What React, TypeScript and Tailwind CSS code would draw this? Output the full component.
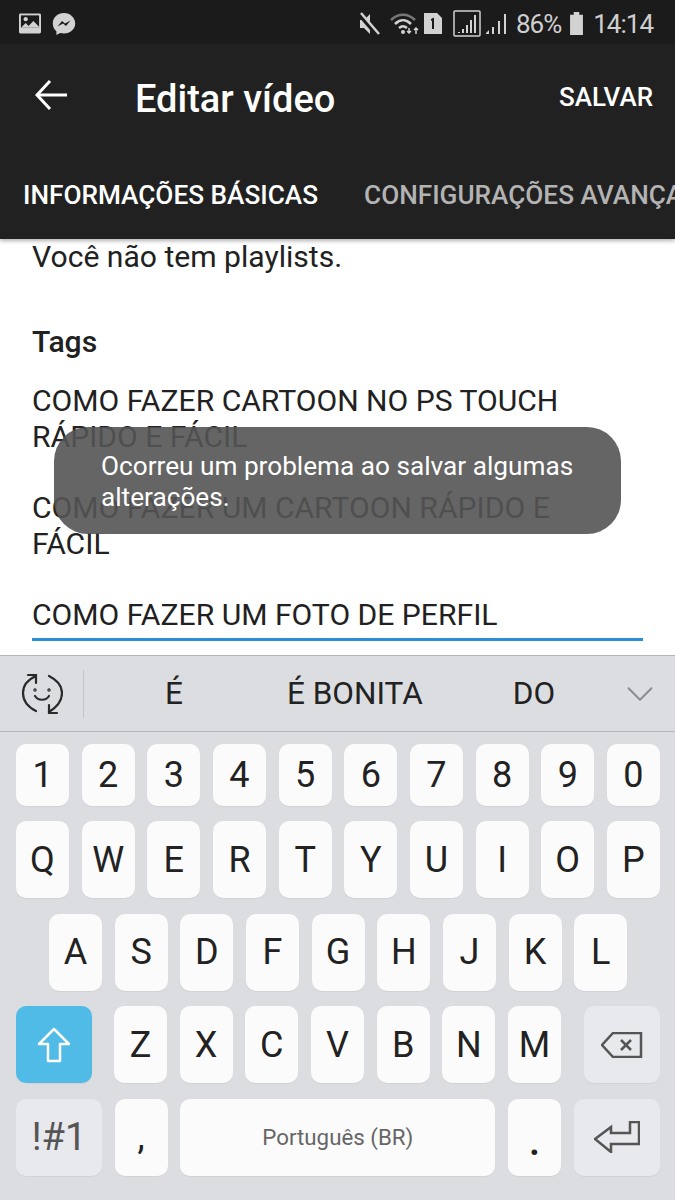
import type { ReactNode } from 'react';
import { ChevronDown } from 'lucide-react';

const font = "font-['Roboto','Liberation_Sans',sans-serif]";

function Key({ label, className = 'w-[53px] bg-[#fbfbfb] text-[#222]' }: { label: ReactNode; className?: string }) {
  return (
    <div className={`flex h-[77px] flex-none items-center justify-center rounded-[10px] text-[36px] leading-none shadow-[0_1px_1px_rgba(0,0,0,0.05)] ${className}`}>
      {label}
    </div>
  );
}

function KeyRow({ keys, className = '' }: { keys: string[]; className?: string }) {
  return (
    <div className={`flex gap-[12.67px] ${className}`}>
      {keys.map((k) => (
        <Key key={k} label={k} />
      ))}
    </div>
  );
}

function StatusBar() {
  return (
    <div className="flex h-[44px] items-center justify-between bg-[#1b1b1b] pl-[19px] pr-[22px] pt-[3px] text-[#cfcfcf]">
      <div className="flex items-center gap-[11px]">
        <svg width="22" height="21" viewBox="0 0 23 21">
          <rect width="23" height="21" rx="1.5" fill="#d2d2d2" />
          <rect x="2" y="2" width="19" height="13" fill="#1b1b1b" />
          <circle cx="7" cy="6" r="2.2" fill="#d2d2d2" />
          <path d="M2 15l5-5 3 3 5-5 6 6v1z" fill="#d2d2d2" />
        </svg>
        <svg width="24" height="24" viewBox="0 0 24 24">
          <path d="M12 1C5.6 1 .8 5.6.8 11.5c0 3.2 1.4 5.9 3.6 7.800V23l3.700-2c1.200.3 2.500.5 3.900.5 6.400 0 11.200-4.500 11.200-10S18.400 1 12 1z" fill="#d2d2d2" />
          <path d="M5.500 14.500l4.500-5.500 3 2.500 5.500-3-4.500 5.500-3-2.500z" fill="#1b1b1b" />
        </svg>
      </div>
      <div className="flex items-center text-[26px] leading-none tracking-[-1px]">
        <svg width="22" height="26" viewBox="0 0 22 26" className="mr-[10px]">
          <path d="M2 9h4l6-6v20l-6-6H2z" fill="#d2d2d2" />
          <path d="M1 3l18 21" stroke="#1b1b1b" strokeWidth="4" />
          <path d="M3 2l18 21" stroke="#d2d2d2" strokeWidth="2.500" />
        </svg>
        <svg width="30" height="24" viewBox="0 0 30 24" className="mr-[3px]">
          <path d="M1 8c7-7 17-7 24 0" fill="none" stroke="#777" strokeWidth="2.500" />
          <path d="M5 12c5-5 11-5 16 0" fill="none" stroke="#d2d2d2" strokeWidth="2.500" />
          <path d="M9 16c3-2.500 5-2.500 8 0" fill="none" stroke="#d2d2d2" strokeWidth="2.500" />
          <circle cx="13" cy="20" r="2" fill="#d2d2d2" />
          <path d="M19 16v5m-2-2l2 2 2-2M26 22v-6m-2 2l2-2 2 2" fill="none" stroke="#d2d2d2" strokeWidth="1.500" />
        </svg>
        <svg width="20" height="21" viewBox="0 0 20 21" className="mr-[10px]">
          <path d="M1 0h13l5 5v16H1z" fill="#d2d2d2" />
          <path d="M8 6l3-1.500V16H9V7.500L8 8z" fill="#1b1b1b" />
        </svg>
        <svg width="28" height="28" viewBox="0 0 28 28" className="mr-[4px]">
          <rect x="1" y="1" width="26" height="25" rx="1" fill="none" stroke="#d2d2d2" strokeWidth="1.500" />
          <path d="M5 22h2v1H5zM9 19h2v4H9zM13 15h2v8h-2zM17 10h2v13h-2zM21 5h2v18h-2z" fill="#d2d2d2" />
        </svg>
        <svg width="22" height="24" viewBox="0 0 22 24" className="mr-[9px]">
          <path d="M1 21l3-3v4H1zM7 15h2v7H7zM13 9h2v13h-2zM19 2h2v20h-2z" fill="#d2d2d2" />
        </svg>
        <span className={font}>86%</span>
        <svg width="15" height="23" viewBox="0 0 14 25" className="ml-[8px] mr-[9px]">
          <path d="M4 0h6v3h4v22H0V3h4z" fill="#d2d2d2" />
        </svg>
        <span className={font}>14:14</span>
      </div>
    </div>
  );
}

export default function App() {
  return (
    <div className={`relative flex h-[1200px] w-[675px] flex-col overflow-hidden bg-white ${font}`}>
      <StatusBar />

      {/* Toolbar + tabs */}
      <div className="relative z-10 h-[195px] overflow-hidden bg-[#212121] shadow-[0_2px_4px_rgba(0,0,0,0.3)]">
        <div className="flex h-[104px] items-center pb-[2px] pl-[35px] pr-[22px]">
          <svg width="32" height="30" viewBox="0 0 32 30" fill="none" stroke="#fff" strokeWidth="3">
            <path d="M32 15H3" />
            <path d="M15 1L2 15l13 14" />
          </svg>
          <span className="ml-[68px] flex-1 pt-[8px] text-[38px] font-medium text-white">Editar vídeo</span>
          <span className="pt-[4px] text-[26px] font-medium text-white">SALVAR</span>
        </div>
        <div className="flex gap-[46px] whitespace-nowrap pl-[23px] pt-[27px] text-[26.2px] font-medium leading-[40px]">
          <span className="text-white">INFORMAÇÕES BÁSICAS</span>
          <span className="text-[#b3b3b3]">CONFIGURAÇÕES AVANÇADAS</span>
        </div>
      </div>

      {/* Form */}
      <div className="h-[416px] flex-none overflow-hidden bg-white pl-[32px] pr-[32px] text-[30.1px] text-[#212121]">
        <p className="leading-[36px]">Você não tem playlists.</p>
        <p className="mt-[47px] font-medium leading-[40px]">Tags</p>
        <p className="mt-[21px] leading-[36px]">COMO FAZER CARTOON NO PS TOUCH RÁPIDO E FÁCIL</p>
        <p className="mt-[35px] pr-[60px] leading-[36px]">COMO FAZER UM CARTOON RÁPIDO E FÁCIL</p>
        <p className="mt-[35px] border-b-[3px] border-[#2b8fd8] pb-[5px] leading-[36px]">COMO FAZER UM FOTO DE PERFIL</p>
      </div>

      {/* Toast */}
      <div className="absolute left-[54px] top-[427px] z-20 flex h-[107px] w-[567px] items-center rounded-[34px] bg-[#545454]/90 pl-[47px] pr-[30px] pt-[3px] text-[26.2px] leading-[31px] text-white">
        Ocorreu um problema ao salvar algumas alterações.
      </div>

      {/* Keyboard */}
      <div className="flex flex-1 flex-col bg-[#dcdde1]">
        <div className="flex h-[77px] flex-none items-center border-y border-[#b4b5b8] text-[31.5px] text-[#222]">
          <div className="flex w-[84px] items-center justify-center border-r border-[#c4c5c9] py-[3px]">
            <svg width="42" height="42" viewBox="0 0 42 42" fill="none" stroke="#2a2a2a" strokeWidth="2.200" strokeLinecap="round">
              <path d="M15 3C6 7 2 13 2 20c0 8 5 14 13 18" />
              <path d="M28 3c8 4 13 10 13 17 0 8-5 14-13 19" />
              <path d="M7 2h8v8" />
              <path d="M28 32v8h8" />
              <path d="M14 23c3 5 11 5 14 0" />
              <circle cx="14" cy="17" r="0.600" />
              <circle cx="28" cy="17" r="0.600" />
            </svg>
          </div>
          <span className="ml-[80px] w-[20px] text-center">É</span>
          <span className="ml-[103px]">É BONITA</span>
          <span className="ml-[90px]">DO</span>
          <ChevronDown className="ml-[62px] h-[46px] w-[46px] text-[#8a8b8f]" strokeWidth={1} />
        </div>

        <div className="flex flex-col gap-[15.500px] pt-[12px]">
          <div className="flex gap-[12.670px] px-[16px]">
            {['1', '2', '3', '4', '5', '6', '7', '8', '9', '0'].map((k) => (
              <div key={k} className="flex h-[61.500px] w-[53px] flex-none items-center justify-center rounded-[10px] bg-[#fbfbfb] text-[36px] text-[#222] shadow-[0_1px_1px_rgba(0,0,0,0.05)]">{k}</div>
            ))}
          </div>
          <KeyRow className="px-[16px]" keys={['Q', 'W', 'E', 'R', 'T', 'Y', 'U', 'I', 'O', 'P']} />
          <KeyRow className="pl-[49px]" keys={['A', 'S', 'D', 'F', 'G', 'H', 'J', 'K', 'L']} />
          <div className="flex gap-[12.670px] px-[16px]">
            <Key
              className="mr-[9.330px] w-[76px] bg-[#4fbbe6] text-white"
              label={
                <svg width="34" height="36" viewBox="0 0 34 36" fill="none" stroke="#fff" strokeWidth="2.500" strokeLinejoin="round">
                  <path d="M17 2L2 17h9v17h12V17h9z" />
                </svg>
              }
            />
            {['Z', 'X', 'C', 'V', 'B', 'N', 'M'].map((k) => (
              <Key key={k} label={k} />
            ))}
            <Key
              className="ml-[10.330px] w-[76px] bg-[#e8e9ed]"
              label={
                <svg width="42" height="26" viewBox="0 0 42 26" fill="none" stroke="#555" strokeWidth="2.500">
                  <path d="M12 1h28v24H12L1 13z" />
                  <path d="M20 8l10 10M30 8L20 18" />
                </svg>
              }
            />
          </div>
          <div className="flex gap-[12.670px] px-[16px]">
            <Key className="w-[86px] bg-[#e8e9ed] !text-[38px] text-[#555]" label="!#1" />
            <Key label="," />
            <Key className="w-[315px] bg-[#fbfbfb] !text-[22.3px] text-[#666]" label="Português (BR)" />
            <Key label={<span className="pt-[12px] font-bold">.</span>} />
            <Key
              className="w-[86px] bg-[#e8e9ed]"
              label={
                <svg width="46" height="32" viewBox="0 0 46 32" fill="none" stroke="#555" strokeWidth="2.500" strokeLinejoin="miter">
                  <path d="M1 18L17 6v6h19V1h9v22H17v8z" />
                </svg>
              }
            />
          </div>
        </div>
      </div>
    </div>
  );
}
